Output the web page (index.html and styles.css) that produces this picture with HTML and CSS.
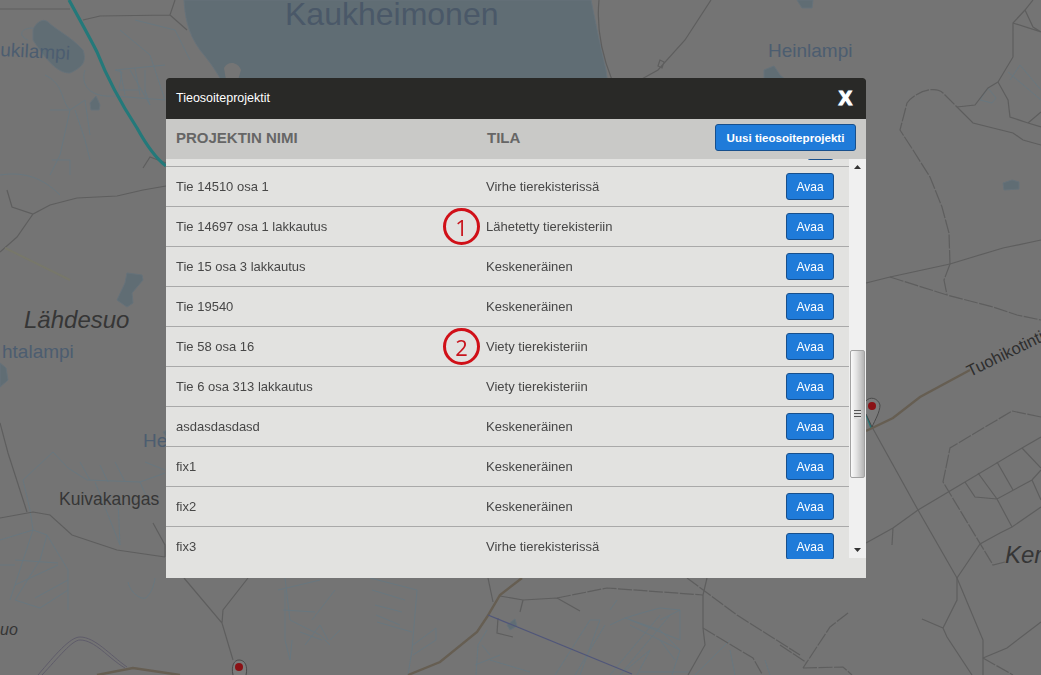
FILE: index.html
```html
<!DOCTYPE html>
<html lang="fi">
<head>
<meta charset="utf-8">
<title>Tieosoiteprojektit</title>
<link rel="stylesheet" href="styles.css">
</head>
<body>
<svg class="map" width="1041" height="675" viewBox="0 0 1041 675" aria-hidden="true">
  <rect class="land" width="1041" height="675"/>
  <g class="water">
    <path d="M184 0 C185 15 187 32 200 50 C210 62 217 72 222 82 L240 100 L610 100 L606 70 C600 45 595 20 591 0 Z"/>
    <path d="M33 30 C36 22 43 18 48 22 C56 30 70 36 83 50 C86 60 85 66 70 73 C60 73 50 66 33 40 Z"/>
    <path d="M90 103 L96 96 L100 105 L99 110 L91 110 Z"/>
    <path d="M127 273 L142 275 L143 280 L132 293 L133 303 L127 307 L117 300 L125 283 Z"/>
    <path d="M0 363 L6 368 L8 380 L0 387 Z"/>
    <path d="M764 70 L774 66 L780 75 L792 85 L795 103 L778 103 L772 85 L764 80 Z"/>
    <path d="M797 0 L813 0 L812 8 L802 8 Z"/>
    <path d="M1003 183 L1012 180 L1019 182 L1019 189 L1004 190 Z"/>
    <path d="M507 625 L515 619 L517 626 L510 630 Z"/>
    <path d="M163 432 L167 430 L167 438 Z"/>
  </g>
  <path class="island" d="M224 68 C228 60 238 62 241 70 L238 80 L226 80 Z"/>
  <g class="ditch">
    <path d="M68 468 L87 480 L140 482 L165 473"/>
    <path d="M53 452 L23 480 L30 510 L33 530 L10 600"/>
    <path d="M53 452 L68 468"/>
    <path d="M80 462 L90 480 M100 465 L108 482 M115 462 L125 482 M140 482 L150 505 M145 462 L165 470 M95 482 L110 520 L120 545 L118 500"/>
    <path d="M33 530 L0 540 M33 530 L47 535 L68 570 L68 610 M47 535 L40 560 L15 600 L40 608 L68 590 M15 560 L58 563 M15 585 L58 565 M35 598 L68 580 M0 565 L15 565"/>
    <path d="M128 582 C130 592 140 600 146 598 C152 592 154 585 155 578"/>
    <path d="M285 578 L290 620 L300 625 L320 635 L330 645 M278 590 L320 580 M283 610 L315 612 M312 620 L335 590 M330 640 L340 630"/>
    <path d="M370 578 L417 590 L412 650 M372 590 L405 600 M375 605 L402 612 M376 615 L400 625 M377 622 L412 632 M413 645 L436 628 L436 640 L413 655 M408 675 L412 650"/>
    <path d="M487 630 L478 645 L476 675 M482 645 L490 655 M500 655 L475 665 M490 660 L530 672"/>
    <path d="M555 675 L590 620 L600 620 L580 675 M575 675 L605 625 M610 675 L660 615 M620 675 L670 615 M637 675 L650 650 L620 675 M640 672 L690 672"/>
    <path d="M610 625 L625 618 L660 630 L680 650 L672 675 M625 618 L645 612 L660 608 L680 610 L660 620 M630 620 L680 640 L680 610 M630 625 L680 650 M660 640 L675 660 M610 610 L617 600"/>
    <path d="M695 675 L730 640 M730 650 L735 675 M765 660 L770 675"/>
    <path d="M285 590 L285 640 L290 660 L292 640 L292 640 M305 645 L320 625 M300 632 L322 640 M320 625 L328 640"/>
    <path d="M33 28 C20 28 18 36 28 40 M45 75 C65 85 60 100 70 110 L85 100 L90 135 M85 70 C80 85 90 98 115 96 L165 100 M115 70 L122 72 L118 95 M120 90 L140 90 M130 70 L150 105 L145 90 M75 110 L85 140 L90 160 M50 110 L70 110 L60 155 L50 175 M52 160 L70 160 L70 175 M0 175 C20 172 40 175 60 195"/>
    <path d="M120 30 L150 55 L165 100 M135 20 L175 30 L190 60 M115 70 L165 65 M120 70 L125 95 M135 68 L140 95 M145 70 L145 95"/>
    <path d="M988 88 L996 98 L992 103 L980 100 L988 88 M1010 80 L1020 65 L1041 90 M1008 72 L1041 100"/>
  </g>
  <g class="road">
    <path d="M0 9 L70 9 M83 20 L100 16 L170 15 L175 0 M170 15 L187 30"/>
    <path d="M7 190 L12 207 L33 214 L50 205 L77 198 L117 196 L143 190 L166 186 M33 214 L17 237 L0 252"/>
    <path d="M143 168 L150 157 L166 163 M0 423 L8 453 L27 512 M0 518 L33 512 L50 515 L72 535 L117 550 L165 557 M153 523 L165 545 L165 557"/>
    <path d="M184 578 L222 623 L233 660 M248 578 L223 610 L222 623"/>
    <path d="M488 578 L493 602 M500 596 L523 600 L557 598 M557 598 L580 611 M523 600 L520 612 M498 618 L497 633 L513 637"/>
    <path d="M703 595 L703 628 L705 645 L688 675 M707 578 L703 595"/>
    <path d="M599 0 C596 30 604 60 612 80 M711 0 L685 40 L658 70 L640 80 M660 60 L658 66 L662 68 L664 62 Z M1041 145 L1023 140 L1013 133 L973 123 L957 107"/>
    <path d="M866 283 L890 277 L950 264 L973 257 L1003 248 L1041 240 M1013 57 L1013 23 L1025 10 L1033 0 M1013 23 L1041 32 M1025 10 L1033 27 L1041 32 M998 82 L1013 57 M998 82 L1008 100 L1010 117 L1028 123 L1041 127 M1028 123 L1041 112"/>
    <path d="M957 107 L975 105 L988 88 L998 82"/>
    <path d="M872 427 L918 510 L957 578 L983 640 L983 675 M866 543 L893 528 L918 510 L965 482 L1022 448 L1041 437 M893 528 L892 545"/>
    <path d="M965 482 L975 497 L997 499 L1032 480 L1041 470 M978 473 L997 499 L1012 527 L1000 533 L980 544 L957 578 M997 462 L1013 490 M1022 448 L1041 468 M1032 480 L1041 500 M1012 527 L1041 507"/>
    <path d="M922 619 L943 628 L957 600 L957 578 M983 658 L1007 648 L1041 622 M943 628 L947 637 L972 675"/>
  </g>
  <g class="road dash">
    <path d="M950 264 L949 233 L942 207 L930 177 L913 150 L900 130 L907 103 C915 92 935 85 943 93 L957 107"/>
    <path d="M890 277 L947 295 L993 307 L1017 315 L1041 320 M950 264 L944 280 L947 295"/>
    <path d="M1041 417 L1012 411 L950 448 L943 482 L993 565 L1005 562"/>
    <path d="M848 613 L830 627 L803 668 M780 645 L807 663 M803 668 L843 667 L852 675 M983 658 L1013 675"/>
    <path d="M557 598 L607 588 L703 595 M687 578 L737 615 L800 655 M703 628 L753 658 L762 674"/>
  </g>
  <path class="teal" d="M69 0 C80 20 92 42 97 52 C108 80 122 105 137 128 C148 148 158 160 166 166"/>
  <path class="teal" d="M866 412 L872 428"/>
  <path class="brown" d="M866 431 L893 418 L920 397 L970 370 M522 578 L500 595 L487 617 L477 632 L440 662 L408 675 M97 675 L133 668 L180 675"/>
  <path class="double" d="M38 675 C55 655 70 637 80 637 C95 637 110 655 127 667 M42 675 C58 658 72 640 80 640 C95 640 108 658 125 668"/>
  <path class="blue" d="M488 615 L632 674"/>
  <path class="faint" d="M5 248 L70 280"/>
  <g class="pin">
    <path d="M866 401 C870 396 878 398 880 405 C880 412 875 420 872 427 L866 414"/>
    <circle cx="872" cy="406" r="4"/>
    <path d="M233 675 C231 666 234 660 239 660 C245 660 248 666 246 675"/>
    <circle cx="239" cy="667" r="4"/>
  </g>
  <text class="lbl-big" x="285" y="25">Kaukheimonen</text>
  <text class="lbl-lake" x="768" y="57">Heinlampi</text>
  <text class="lbl-lake" x="0" y="56" transform="rotate(3 0 56)">ukilampi</text>
  <text class="lbl-place" x="24" y="328">Lähdesuo</text>
  <text class="lbl-lake" x="2" y="358">htalampi</text>
  <text class="lbl-lake" x="143" y="447">He</text>
  <text class="lbl-name" x="59" y="505">Kuivakangas</text>
  <text class="lbl-small" x="0" y="635">uo</text>
  <text class="lbl-place" x="1005" y="563">Ker</text>
  <text class="lbl-road" x="970" y="377" transform="rotate(-26 970 377)">Tuohikotinti</text>
</svg>

<section class="modal">
  <header class="modal-head">
    <h1 class="modal-title">Tieosoiteprojektit</h1>
    <span class="modal-close">X</span>
  </header>
  <div class="toolbar">
    <span class="col-name">PROJEKTIN NIMI</span>
    <span class="col-state">TILA</span>
    <button class="btn btn-new" type="button">Uusi tieosoiteprojekti</button>
  </div>
  <div class="list-wrap">
    <div class="rows">
      <div class="row row-cut">
        <button class="btn btn-open" type="button" aria-label="Avaa"></button>
      </div>
      <div class="row">
        <span class="cell-name">Tie 14510 osa 1</span>
        <span class="cell-state">Virhe tierekisterissä</span>
        <button class="btn btn-open" type="button">Avaa</button>
      </div>
      <div class="row">
        <span class="cell-name">Tie 14697 osa 1 lakkautus</span>
        <span class="cell-state"><span class="mark">1</span>Lähetetty tierekisteriin</span>
        <button class="btn btn-open" type="button">Avaa</button>
      </div>
      <div class="row">
        <span class="cell-name">Tie 15 osa 3 lakkautus</span>
        <span class="cell-state">Keskeneräinen</span>
        <button class="btn btn-open" type="button">Avaa</button>
      </div>
      <div class="row">
        <span class="cell-name">Tie 19540</span>
        <span class="cell-state">Keskeneräinen</span>
        <button class="btn btn-open" type="button">Avaa</button>
      </div>
      <div class="row">
        <span class="cell-name">Tie 58 osa 16</span>
        <span class="cell-state"><span class="mark">2</span>Viety tierekisteriin</span>
        <button class="btn btn-open" type="button">Avaa</button>
      </div>
      <div class="row">
        <span class="cell-name">Tie 6 osa 313 lakkautus</span>
        <span class="cell-state">Viety tierekisteriin</span>
        <button class="btn btn-open" type="button">Avaa</button>
      </div>
      <div class="row">
        <span class="cell-name">asdasdasdasd</span>
        <span class="cell-state">Keskeneräinen</span>
        <button class="btn btn-open" type="button">Avaa</button>
      </div>
      <div class="row">
        <span class="cell-name">fix1</span>
        <span class="cell-state">Keskeneräinen</span>
        <button class="btn btn-open" type="button">Avaa</button>
      </div>
      <div class="row">
        <span class="cell-name">fix2</span>
        <span class="cell-state">Keskeneräinen</span>
        <button class="btn btn-open" type="button">Avaa</button>
      </div>
      <div class="row">
        <span class="cell-name">fix3</span>
        <span class="cell-state">Virhe tierekisterissä</span>
        <button class="btn btn-open" type="button">Avaa</button>
      </div>
    </div>
    <div class="scrollbar">
      <svg class="arrow" width="7" height="4" viewBox="0 0 7 4" aria-hidden="true"><path d="M3.5 0 L7 4 L0 4 Z"/></svg>
      <div class="thumb"><span class="grip"></span></div>
      <svg class="arrow" width="7" height="4" viewBox="0 0 7 4" aria-hidden="true"><path d="M0 0 L7 0 L3.5 4 Z"/></svg>
    </div>
  </div>
  <div class="modal-foot"></div>
</section>
</body>
</html>
```
FILE: styles.css
```css
* { box-sizing: border-box; }

html, body {
  margin: 0;
  height: 100%;
  overflow: hidden;
  background: #747474;
  font-family: "Liberation Sans", Arial, sans-serif;
}

/* free canvas map behind the dialog */
.map { position: absolute; left: 0; top: 0; display: block; }
.land { fill: #747474; }
.water path { fill: #606d74; stroke: #66727a; stroke-width: 1; }
.island { fill: #757575; }
.ditch path { fill: none; stroke: #68777f; stroke-width: 1; }
.road path { fill: none; stroke: #5e5e5e; stroke-width: 1.2; }
.road.dash path { stroke-dasharray: 14 1.5; }
.teal { fill: none; stroke: #24797a; stroke-width: 3.2; }
.brown { fill: none; stroke: #665e52; stroke-width: 2.4; }
.double { fill: none; stroke: #5f5c6a; stroke-width: 1; }
.blue { fill: none; stroke: #50567a; stroke-width: 1.2; }
.faint { fill: none; stroke: #77776a; stroke-width: 2; }
.pin path { fill: #7a7a7a; stroke: #4a4a4a; stroke-width: 1; }
.pin circle { fill: #8a1115; }

.map text { font-family: "Liberation Sans", Arial, sans-serif; }
.lbl-big { font-size: 32px; fill: #4a5868; }
.lbl-lake { font-size: 19px; fill: #4c5d70; }
.lbl-place { font-size: 24px; font-style: italic; fill: #363636; }
.lbl-name { font-size: 17.5px; fill: #363636; }
.lbl-small { font-size: 16px; font-style: italic; fill: #363636; }
.lbl-road { font-size: 16.5px; fill: #2e2e2e; }

/* dialog */
.modal {
  position: fixed;
  left: 166px;
  top: 78px;
  width: 700px;
  height: 500px;
  display: flex;
  flex-direction: column;
  background: #e2e2e0;
  border-radius: 3px 3px 0 0;
}

.modal-head {
  flex: 0 0 41px;
  display: flex;
  align-items: center;
  justify-content: space-between;
  padding: 0 14px 2px 10px;
  background: #292927;
  border-radius: 3px 3px 0 0;
  color: #fff;
}

.modal-title { margin: 0; font-size: 12.5px; font-weight: 400; }

.modal-close {
  font-size: 20px;
  line-height: 1;
  font-weight: 700;
  color: #fff;
  -webkit-text-stroke: 1.2px #fff;
  text-shadow: 0 0 2px #6fa8e8;
}

.toolbar {
  flex: 0 0 40px;
  display: flex;
  align-items: center;
  padding: 0 10px 3px;
  background: #c9c9c7;
  color: #666;
  font-size: 15px;
  font-weight: 700;
}

.col-name { flex: 0 0 311px; }
.col-state { flex: 1 1 auto; }

.btn {
  margin: 0;
  padding: 0;
  height: 27px;
  font-family: inherit;
  color: #fff;
  background: #1f7bd9;
  border: 1px solid #174f8c;
  border-radius: 3px;
}

.btn-new { width: 141px; font-size: 11.6px; font-weight: 700; }
.btn-open { flex: 0 0 48px; width: 48px; font-size: 12px; }

.list-wrap {
  flex: 0 0 400px;
  display: flex;
  overflow: hidden;
}

.rows { flex: 0 0 683px; overflow: hidden; }

.row {
  position: relative;
  display: flex;
  align-items: center;
  height: 40px;
  padding: 0 15px 0 10px;
  border-bottom: 1px solid #a9a9a9;
  font-size: 13px;
  color: #474747;
}

.row-cut {
  height: 8px;
  align-items: flex-end;
  justify-content: flex-end;
  padding-bottom: 6px;
}

.row-cut .btn { flex: 0 0 27px; }

.cell-name { flex: 0 0 310px; padding-bottom: 1px; }
.cell-state { flex: 1 1 auto; padding-bottom: 1px; }

.mark {
  position: absolute;
  left: 277px;
  top: 1px;
  width: 37px;
  height: 37px;
  display: flex;
  align-items: center;
  justify-content: center;
  border: 3px solid #d01018;
  border-radius: 50%;
  font-size: 22px;
  color: #c8141c;
  font-family: "Open Sans", "Liberation Sans", sans-serif;
}

.scrollbar {
  position: relative;
  flex: 0 0 17px;
  height: 399px;
  display: flex;
  flex-direction: column;
  align-items: center;
  justify-content: space-between;
  padding: 6px 0;
  background: #f0f0f0;
}

.arrow path { fill: #333; }

.thumb {
  position: absolute;
  left: 1px;
  top: 191px;
  width: 15px;
  height: 128px;
  display: flex;
  align-items: center;
  justify-content: center;
  background: linear-gradient(to right, #fafafa, #e4e4e4 40%, #b4b4b4);
  border: 1px solid #a2a2a2;
  border-radius: 2px;
}

.grip {
  width: 7px;
  height: 9px;
  background: repeating-linear-gradient(to bottom, #555 0, #555 1px, #ddd 1px, #ddd 3px);
}

.modal-foot { flex: 1 1 auto; }
```
